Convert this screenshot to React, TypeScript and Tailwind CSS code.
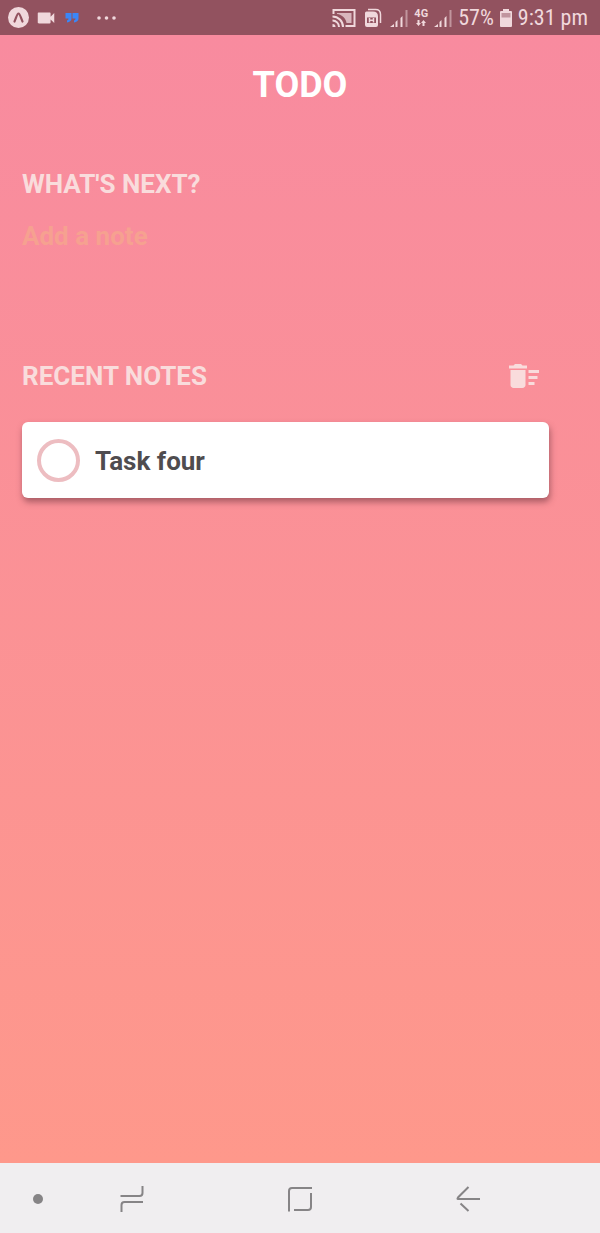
import { useState } from "react";
import { MdDeleteSweep, MdVideocam } from "react-icons/md";

function CastIcon() {
  return (
    <svg className="h-5 w-6" viewBox="0 0 24 20" fill="none" stroke="currentColor" aria-hidden="true">
      <path d="M1.500 6V2h21v16h-9" strokeWidth="2" />
      <path d="M5 5h14.500v10h-5C14 10.500 10 6.500 5 6z" fill="currentColor" stroke="none" opacity=".75" />
      <path d="M.5 8.500A10.500 10.500 0 0 1 11 19M.5 12.500A6.500 6.500 0 0 1 7 19" strokeWidth="2" />
      <path d="M.5 16v3h3a3 3 0 0 0-3-3z" fill="currentColor" stroke="none" />
    </svg>
  );
}

function SimIcon() {
  return (
    <svg className="h-5 w-[18px]" viewBox="0 0 18 20" fill="none" aria-hidden="true">
      <path d="M4 1.500h7.500q5 0 5 5V15" stroke="currentColor" strokeWidth="1.500" />
      <path
        fillRule="evenodd"
        fill="currentColor"
        d="M2.500 3.500H9q5 0 5 5V17a2 2 0 0 1-2 2H3a2 2 0 0 1-2-2V5a1.500 1.500 0 0 1 1.500-1.500zM3 9.500v5.500h9V9.500z"
      />
      <path d="M5.500 10v4.500M9.500 10v4.500M5.500 12.200h4" stroke="currentColor" strokeWidth="1.500" />
    </svg>
  );
}

function SignalIcon() {
  return (
    <svg className="h-[18px] w-[18px]" viewBox="0 0 18 18" fill="currentColor" aria-hidden="true">
      <path d="M0 18l4-3v3zM5.500 13l2-2v7h-2zM10.500 9l2-2v11h-2z" />
      <path d="M15.500 1h2v17h-2z" opacity=".5" />
    </svg>
  );
}

function StatusBar() {
  return (
    <header className="flex h-[35px] items-center justify-between bg-[#92525f] pr-3 pl-2 text-[#f0d8dc]">
      <div className="flex items-center">
        <svg className="size-[21px]" viewBox="0 0 21 21" aria-hidden="true">
          <circle cx="10.500" cy="10.500" r="10.500" fill="currentColor" />
          <path
            d="M6.500 14.500C8 11.500 9 6.500 10.500 6.500S13 11.500 14.500 14.500"
            fill="none"
            stroke="#92525f"
            strokeWidth="2.200"
            strokeLinecap="round"
          />
        </svg>
        <MdVideocam className="ml-1.5 size-[22px]" aria-hidden="true" />
        <svg className="ml-2 h-2.5 w-3.5" viewBox="0 0 14 10" fill="#3b86f7" aria-hidden="true">
          <path d="M.5 0H6.500v5.500c0 2-1.500 3.500-4.500 4V7.500C3 7 3.500 6.500 3.500 5.500H.5zM7.500 0h6v5.500c0 2-1.500 3.500-4.500 4V7.500c1-.5 1.500-1 1.500-2h-3z" />
        </svg>
        <svg className="ml-[18px] h-1 w-5" viewBox="0 0 20 4" fill="currentColor" aria-hidden="true">
          <circle cx="2" cy="2" r="1.800" />
          <circle cx="9.500" cy="2" r="1.800" />
          <circle cx="17" cy="2" r="1.800" />
        </svg>
      </div>
      <div className="flex items-center">
        <CastIcon />
        <span className="ml-2 flex"><SimIcon /></span>
        <span className="ml-2 flex"><SignalIcon /></span>
        <span className="ml-1.5 flex flex-col items-center text-[11px] leading-[10px] font-bold">
          4G
          <svg className="mt-px h-1.5 w-2.5" viewBox="0 0 10 6" fill="currentColor" aria-hidden="true">
            <path d="M1.500 0h2v3H5L2.500 6 0 3h1.500zM6.500 6h2V3H10L7.500 0 5 3h1.500z" />
          </svg>
        </span>
        <span className="ml-1.5 flex"><SignalIcon /></span>
        <span className="ml-1.5 font-['Roboto_Condensed','Roboto',sans-serif] text-[22px] leading-6">57%</span>
        <svg className="mx-1.5 h-[18px] w-3" viewBox="0 0 12 18" fill="currentColor" aria-hidden="true">
          <path d="M3 0h6v2h2a1 1 0 0 1 1 1v14a1 1 0 0 1-1 1H1a1 1 0 0 1-1-1V3a1 1 0 0 1 1-1h2z" />
          <path d="M1.500 4h9v4.500h-9z" fill="#92525f" opacity=".5" />
        </svg>
        <span className="font-['Roboto_Condensed','Roboto',sans-serif] text-[22px] leading-6">9:31 pm</span>
      </div>
    </header>
  );
}

function NavBar() {
  return (
    <nav className="flex h-[70px] items-center bg-[#f0eef0] pt-0.5 text-[#868486]">
      <span className="ml-[33px] size-2.5 rounded-full bg-[#868486]" />
      <div className="flex flex-1 items-center justify-between pr-[120px] pl-[77px]">
        <button type="button" aria-label="Recent apps">
          <svg className="h-[26px] w-6" viewBox="0 0 24 26" fill="none" stroke="currentColor" strokeWidth="2">
            <path d="M.5 10H19.500q3 0 3-3V0M23 16H4.500q-3 0-3 3v7" />
          </svg>
        </button>
        <button type="button" aria-label="Home">
          <svg className="size-[26px]" viewBox="0 0 26 26" fill="none" stroke="currentColor" strokeWidth="2">
            <path d="M2 25.500V5q0-3 3-3h20M24 7v14q0 3-3 3H7" />
          </svg>
        </button>
        <button type="button" aria-label="Back">
          <svg className="h-[26px] w-6" viewBox="0 0 24 26" fill="none" stroke="currentColor" strokeWidth="2">
            <path d="M12.500 1L2 11.500Q1 13 2 13h22M4.500 17.500L12.500 25" />
          </svg>
        </button>
      </div>
    </nav>
  );
}

export default function App() {
  const [note, setNote] = useState("");
  const [done, setDone] = useState(false);

  return (
    <div className="flex min-h-screen flex-col bg-[#92525f] font-['Roboto',sans-serif]">
      <StatusBar />
      <main className="flex-1 bg-linear-to-b from-[#f88b9f] to-[#fe988b] px-[22px]">
        <h1 className="pt-7 text-center text-[36px] leading-[44px] font-bold text-white">TODO</h1>

        <section className="pt-[62px]">
          <label htmlFor="note" className="block text-[26px] leading-[30px] font-bold text-[#f9dcdc]">
            WHAT'S NEXT?
          </label>
          <input
            id="note"
            value={note}
            onChange={(e) => setNote(e.target.value)}
            placeholder="Add a note"
            className="mt-4 block h-[42px] w-full bg-transparent text-[26px] font-bold text-white outline-none placeholder:text-[#f6a190] placeholder:opacity-100"
          />
        </section>

        <section className="pt-[101px] pr-[29px]">
          <div className="flex h-9 items-center justify-between pr-[7px] text-[#f9dcdc]">
            <h2 className="text-[26px] leading-[30px] font-bold">RECENT NOTES</h2>
            <button type="button" aria-label="Delete all notes">
              <MdDeleteSweep className="size-9" />
            </button>
          </div>
          <ul className="mt-7">
            <li className="flex h-[76px] items-center rounded-md bg-white px-[15px] pt-px shadow-[1px_4px_6px_rgba(90,40,50,0.5)]">
              <input
                id="task-four"
                type="checkbox"
                checked={done}
                onChange={() => setDone(!done)}
                className="size-[43px] appearance-none rounded-full border-4 border-[#edbdc1] checked:bg-[#edbdc1]"
              />
              <label htmlFor="task-four" className="ml-[15px] text-[26px] leading-[30px] font-bold text-[#4f4c4f]">
                Task four
              </label>
            </li>
          </ul>
        </section>
      </main>
      <NavBar />
    </div>
  );
}
